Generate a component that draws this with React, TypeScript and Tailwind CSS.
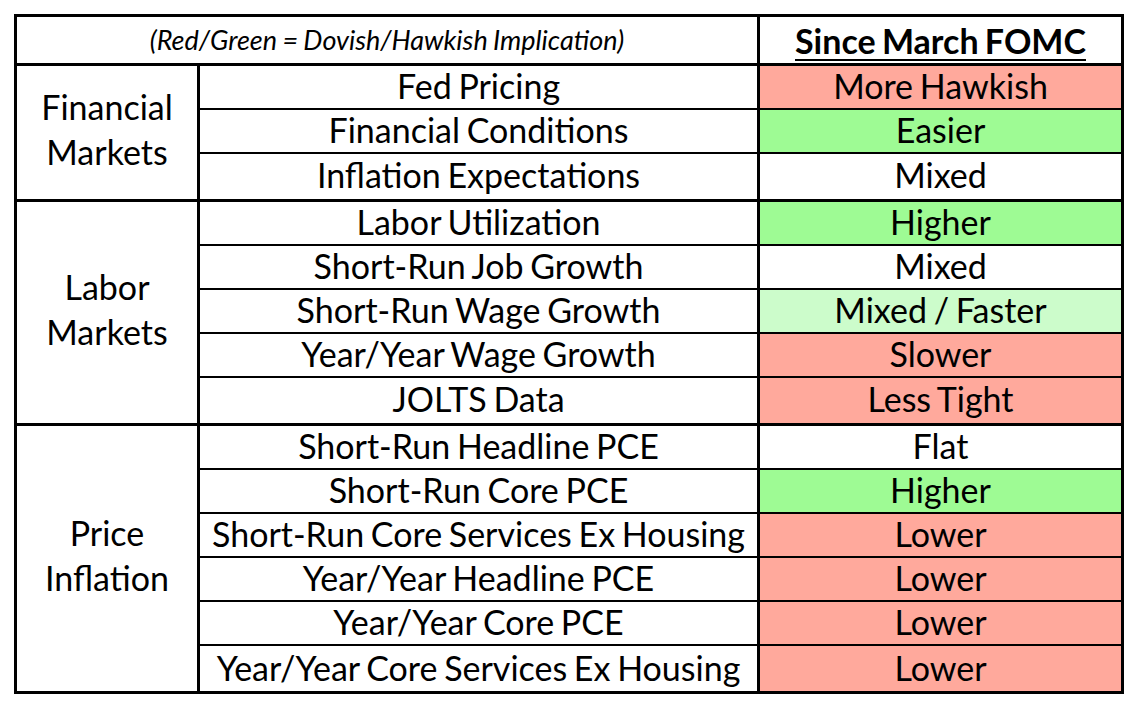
import React from 'react';

type Tone = 'red' | 'green' | 'lightgreen' | 'none';

interface Row {
  label: string;
  value: string;
  tone: Tone;
}

interface Section {
  title: string[];
  rows: Row[];
}

const TONE_BG: Record<Tone, string> = {
  red: 'bg-[#ffa99c]',
  green: 'bg-[#9efb94]',
  lightgreen: 'bg-[#ccfccb]',
  none: 'bg-white',
};

const SECTIONS: Section[] = [
  {
    title: ['Financial', 'Markets'],
    rows: [
      { label: 'Fed Pricing', value: 'More Hawkish', tone: 'red' },
      { label: 'Financial Conditions', value: 'Easier', tone: 'green' },
      { label: 'Inflation Expectations', value: 'Mixed', tone: 'none' },
    ],
  },
  {
    title: ['Labor', 'Markets'],
    rows: [
      { label: 'Labor Utilization', value: 'Higher', tone: 'green' },
      { label: 'Short-Run Job Growth', value: 'Mixed', tone: 'none' },
      { label: 'Short-Run Wage Growth', value: 'Mixed / Faster', tone: 'lightgreen' },
      { label: 'Year/Year Wage Growth', value: 'Slower', tone: 'red' },
      { label: 'JOLTS Data', value: 'Less Tight', tone: 'red' },
    ],
  },
  {
    title: ['Price', 'Inflation'],
    rows: [
      { label: 'Short-Run Headline PCE', value: 'Flat', tone: 'none' },
      { label: 'Short-Run Core PCE', value: 'Higher', tone: 'green' },
      { label: 'Short-Run Core Services Ex Housing', value: 'Lower', tone: 'red' },
      { label: 'Year/Year Headline PCE', value: 'Lower', tone: 'red' },
      { label: 'Year/Year Core PCE', value: 'Lower', tone: 'red' },
      { label: 'Year/Year Core Services Ex Housing', value: 'Lower', tone: 'red' },
    ],
  },
];

export default function App() {
  return (
    <div className="w-[1136px] h-[714px] bg-white pt-[14px] pl-[14px] text-black font-['Lato','Noto_Sans',sans-serif]">
      <div className="w-[1110px] border-[3px] border-black">
        {/* header */}
        <div className="flex h-[49px] border-b-[3px] border-black">
          <div className="w-[743px] border-r-[3px] border-black flex items-center justify-center text-[27px] italic [word-spacing:-1px]">
            (Red/Green = Dovish/Hawkish Implication)
          </div>
          <div className="flex-1 flex items-center justify-center text-[34px] font-bold underline decoration-2 underline-offset-[5px] [word-spacing:-2px]">
            Since March FOMC
          </div>
        </div>

        {SECTIONS.map((section, si) => (
          <div
            key={si}
            className={`flex ${si < SECTIONS.length - 1 ? 'border-b-[3px] border-black' : ''}`}
          >
            {/* category */}
            <div className="w-[183px] border-r-[3px] border-black flex flex-col items-center justify-center pb-[6px] text-[34px] leading-[45px]">
              {section.title.map((t) => (
                <span key={t}>{t}</span>
              ))}
            </div>

            <div className="flex-1 flex flex-col">
              {section.rows.map((row, ri) => (
                <div
                  key={row.label}
                  className={`flex h-[44.2px] ${ri < section.rows.length - 1 ? 'border-b-2 border-black' : ''}`}
                >
                  <div className="w-[560px] border-r-[3px] border-black flex items-center justify-center pb-[3px] text-[34px] whitespace-nowrap [word-spacing:-2px]">
                    {row.label}
                  </div>
                  <div className={`flex-1 flex items-center justify-center pb-[3px] text-[34px] whitespace-nowrap [word-spacing:-2px] ${TONE_BG[row.tone]}`}>
                    {row.value}
                  </div>
                </div>
              ))}
            </div>
          </div>
        ))}
      </div>
    </div>
  );
}
